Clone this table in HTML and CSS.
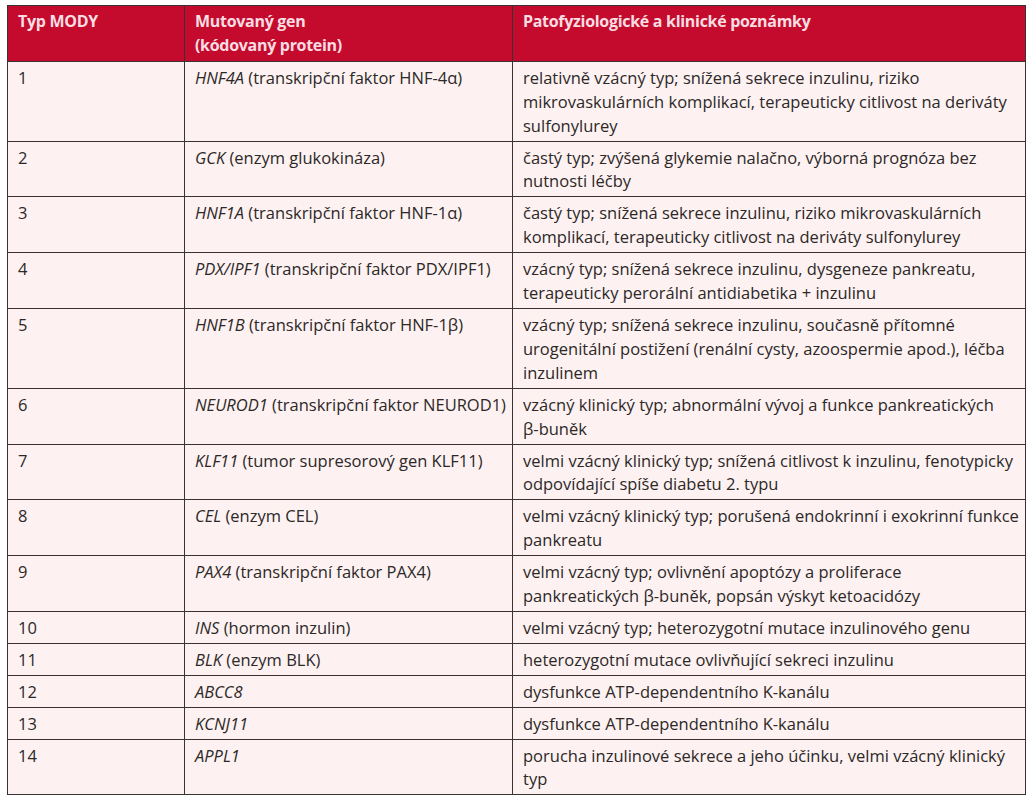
FILE: index.html
```html
<!DOCTYPE html>
<html lang="cs">
<head>
<meta charset="utf-8">
<title>Typy MODY</title>
<link rel="stylesheet" href="styles.css">
</head>
<body>
<table class="mody">
  <colgroup>
    <col class="c1"><col class="c2"><col class="c3">
  </colgroup>
  <thead>
    <tr>
      <th>Typ MODY</th>
      <th>Mutovaný gen<br>(kódovaný protein)</th>
      <th>Patofyziologické a klinické poznámky</th>
    </tr>
  </thead>
  <tbody>
    <tr><td>1</td><td><i>HNF4A</i> (transkripční faktor HNF-4α)</td><td>relativně vzácný typ; snížená sekrece inzulinu, riziko<br>mikrovaskulárních komplikací, terapeuticky citlivost na deriváty<br>sulfonylurey</td></tr>
    <tr><td>2</td><td><i>GCK</i> (enzym glukokináza)</td><td>častý typ; zvýšená glykemie nalačno, výborná prognóza bez<br>nutnosti léčby</td></tr>
    <tr><td>3</td><td><i>HNF1A</i> (transkripční faktor HNF-1α)</td><td>častý typ; snížená sekrece inzulinu, riziko mikrovaskulárních<br>komplikací, terapeuticky citlivost na deriváty sulfonylurey</td></tr>
    <tr><td>4</td><td><i>PDX/IPF1</i> (transkripční faktor PDX/IPF1)</td><td>vzácný typ; snížená sekrece inzulinu, dysgeneze pankreatu,<br>terapeuticky perorální antidiabetika + inzulinu</td></tr>
    <tr><td>5</td><td><i>HNF1B</i> (transkripční faktor HNF-1β)</td><td>vzácný typ; snížená sekrece inzulinu, současně přítomné<br>urogenitální postižení (renální cysty, azoospermie apod.), léčba<br>inzulinem</td></tr>
    <tr><td>6</td><td><i>NEUROD1</i> (transkripční faktor NEUROD1)</td><td>vzácný klinický typ; abnormální vývoj a funkce pankreatických<br>β-buněk</td></tr>
    <tr><td>7</td><td><i>KLF11</i> (tumor supresorový gen KLF11)</td><td>velmi vzácný klinický typ; snížená citlivost k inzulinu, fenotypicky<br>odpovídající spíše diabetu 2. typu</td></tr>
    <tr><td>8</td><td><i>CEL</i> (enzym CEL)</td><td>velmi vzácný klinický typ; porušená endokrinní i exokrinní funkce<br>pankreatu</td></tr>
    <tr><td>9</td><td><i>PAX4</i> (transkripční faktor PAX4)</td><td>velmi vzácný typ; ovlivnění apoptózy a proliferace<br>pankreatických β-buněk, popsán výskyt ketoacidózy</td></tr>
    <tr><td>10</td><td><i>INS</i> (hormon inzulin)</td><td>velmi vzácný typ; heterozygotní mutace inzulinového genu</td></tr>
    <tr><td>11</td><td><i>BLK</i> (enzym BLK)</td><td>heterozygotní mutace ovlivňující sekreci inzulinu</td></tr>
    <tr><td>12</td><td><i>ABCC8</i></td><td>dysfunkce ATP-dependentního K-kanálu</td></tr>
    <tr><td>13</td><td><i>KCNJ11</i></td><td>dysfunkce ATP-dependentního K-kanálu</td></tr>
    <tr><td>14</td><td><i>APPL1</i></td><td>porucha inzulinové sekrece a jeho účinku, velmi vzácný klinický<br>typ</td></tr>
  </tbody>
</table>
</body>
</html>
```
FILE: styles.css
```css
html, body {
  margin: 0;
  padding: 0;
  background: #ffffff;
}
body {
  padding: 5px 0 0 7px;
  font-family: "Open Sans", Lato, "Liberation Sans", sans-serif;
  font-size: 16.5px;
  line-height: 23.9px;
  color: #2c2828;
}
.mody {
  border-collapse: collapse;
  table-layout: fixed;
  width: 1018px;
}
.c1 { width: 177px; }
.c2 { width: 328px; }
.c3 { width: 513px; }
.mody th,
.mody td {
  border: 1px solid #3a3232;
  padding: 4px 6px 3px 10px;
  text-align: left;
  vertical-align: top;
  white-space: nowrap;
}
.mody th {
  background: #c50b2d;
  color: #f8dde2;
  font-size: 16px;
  font-weight: 700;
  letter-spacing: -0.3px;
  padding-top: 4px;
  padding-bottom: 3px;
}
.mody td {
  background: #fdf2f1;
}
.mody td i {
  font-style: italic;
}
```
